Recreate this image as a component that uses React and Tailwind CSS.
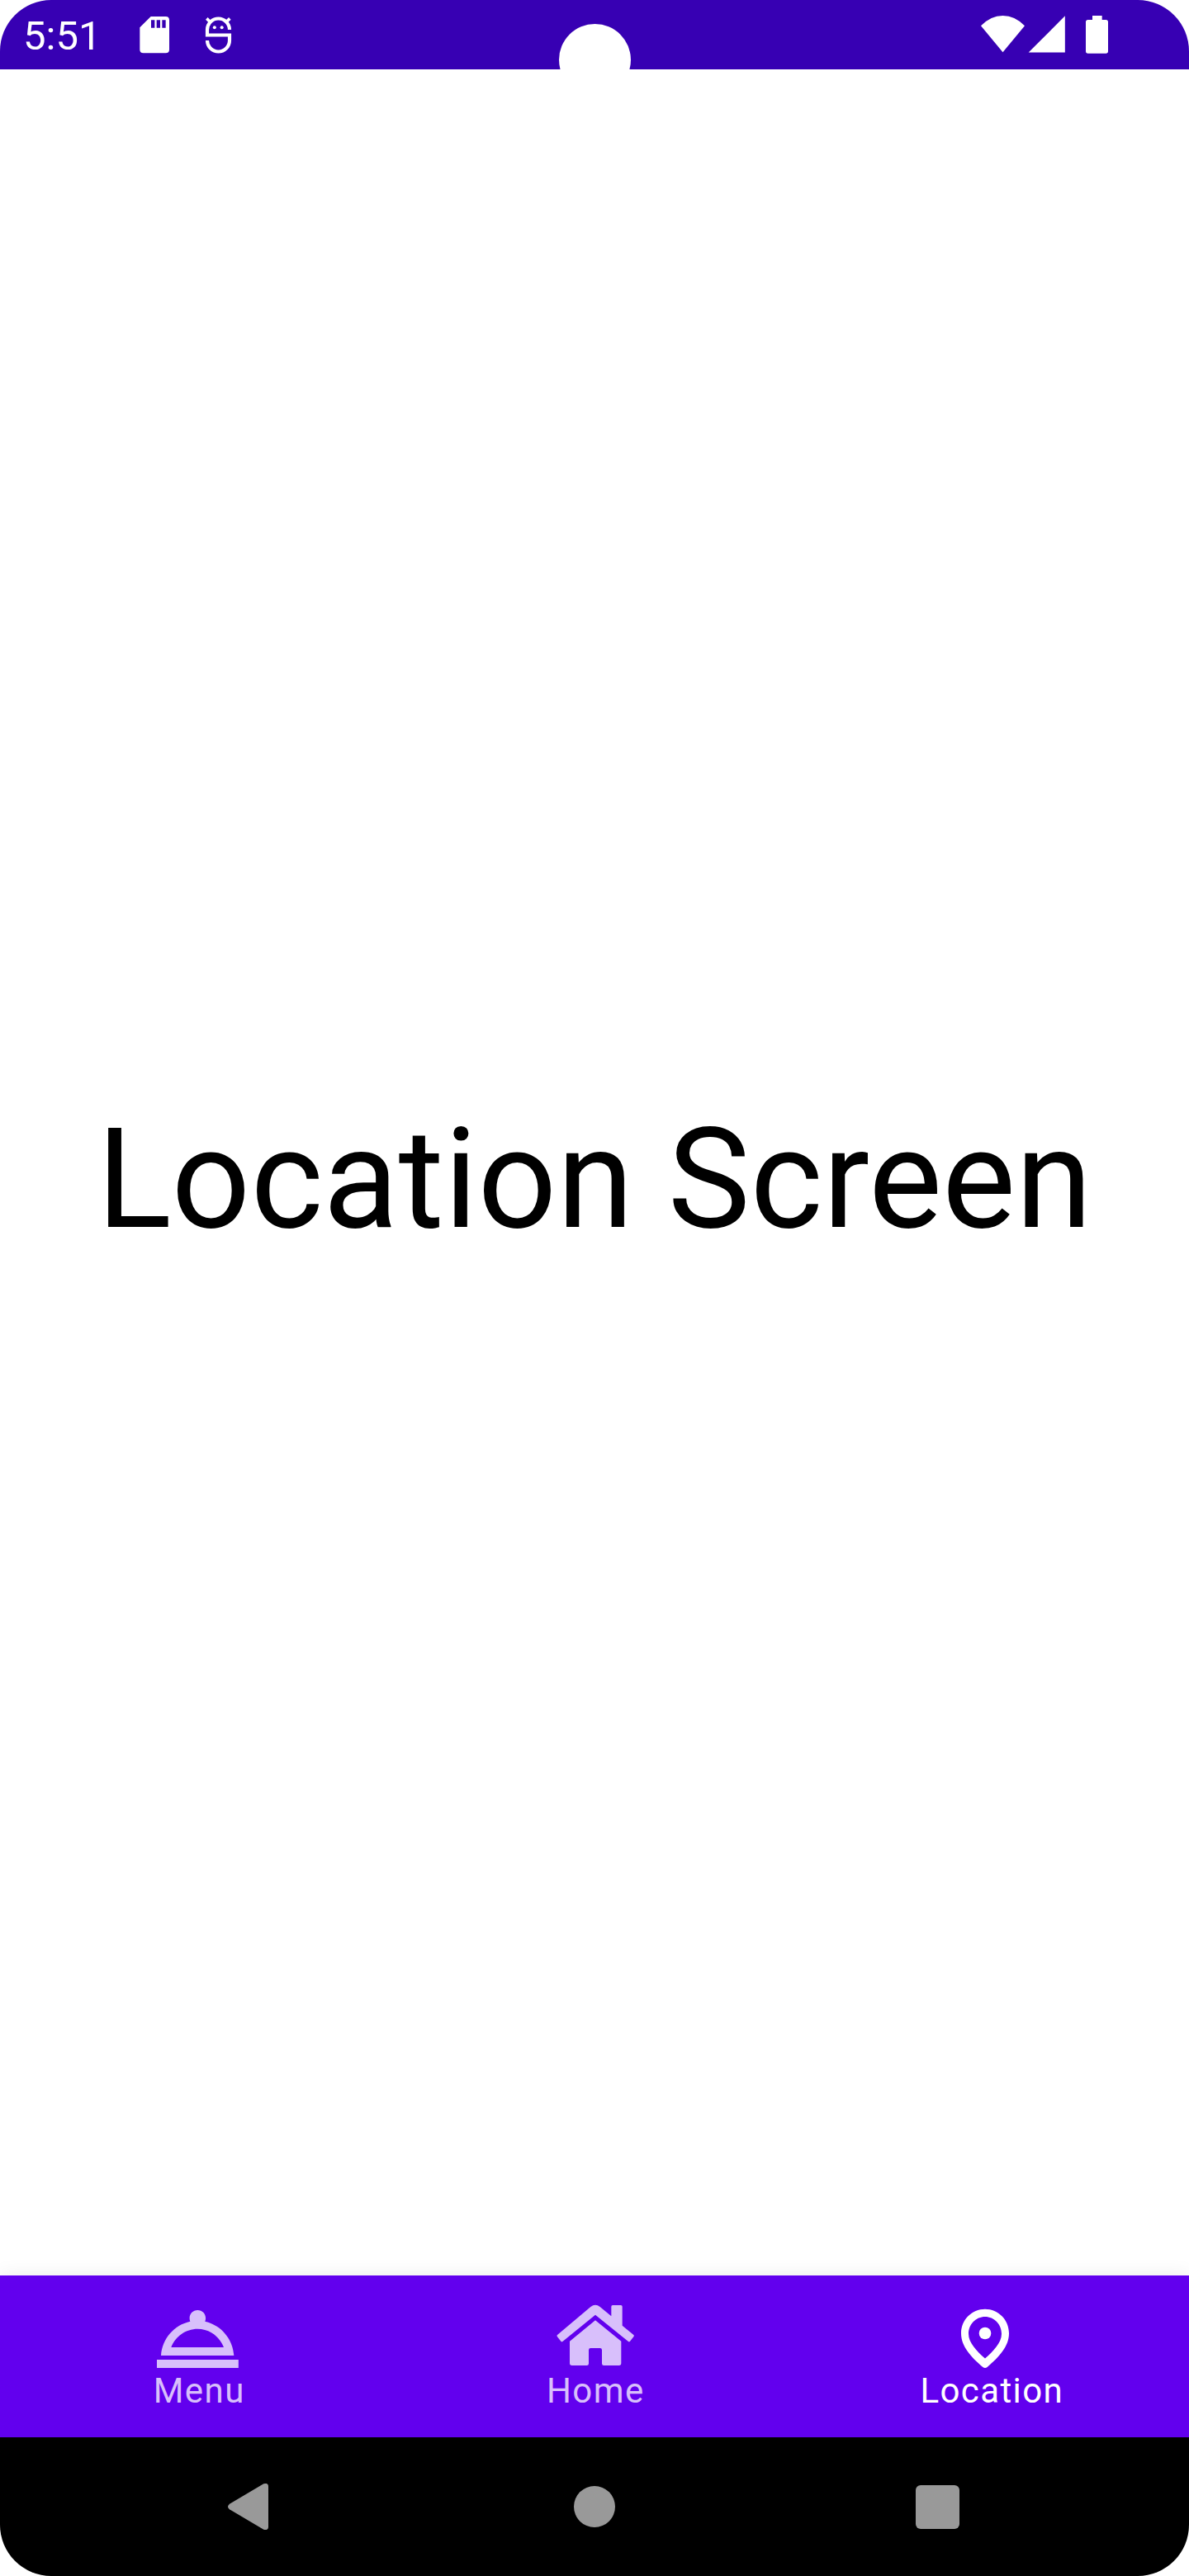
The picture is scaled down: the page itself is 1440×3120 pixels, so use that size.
function StatusBar() {
  return (
    <header className="relative flex h-[84px] shrink-0 overflow-hidden bg-[#3700b3] text-white">
      <span className="ml-[28px] mt-[15px] w-[132px] text-[49px] leading-[58px]">5:51</span>
      <svg className="h-[84px] w-[60px]" viewBox="480 0 180 252" fill="currentColor">
        <path
          fillRule="evenodd"
          d="M548 60H602Q615 60 615 73V180Q615 193 602 193H521Q508 193 508 180V100ZM549 73V101H562V73ZM569 73V101H582V73ZM589 73V101H602V73Z"
        />
      </svg>
      <svg className="ml-[15px] h-[84px] w-[60px]" viewBox="705 0 180 252" fill="none" stroke="currentColor">
        <path d="M834 108A40.500 40.500 0 0 0 753 108V127.500H834V147A40.500 40.500 0 0 1 753 147" strokeWidth="12.500" />
        <path d="M751 67L766 82M835 67L820 82" strokeWidth="11" />
        <circle cx="779.500" cy="100" r="6" fill="currentColor" stroke="none" />
        <circle cx="806" cy="100" r="6" fill="currentColor" stroke="none" />
      </svg>
      <div className="absolute left-[677px] top-[29px] h-[87px] w-[87px] rounded-full bg-white" />
      <svg className="ml-auto mr-[80px] h-[84px] w-[180px]" viewBox="60 0 540 252" fill="currentColor">
        <path d="M84 94Q119 57 163.500 57Q208 57 243 94L163.500 190Z" />
        <path d="M389.500 58V190.500H257Z" />
        <path d="M489 57H524V72H538Q546 72 546 80V186Q546 194 538 194H473Q465 194 465 186V80Q465 72 473 72H489Z" />
      </svg>
    </header>
  );
}

function MenuIcon() {
  return (
    <svg className="h-[84px] w-[110px]" viewBox="75 138 330 252" fill="currentColor">
      <path d="M90 354H386.500V384H90Z" />
      <path
        fillRule="evenodd"
        d="M105 339C109 278 153 228 211 215.500C203 194 217 174 238 174C259 174 273 194 265 215.500C323 228 366 278 370 339ZM142 309H333C318 270 281 242.500 238 242.500C195 242.500 157 270 142 309Z"
      />
    </svg>
  );
}

function HomeIcon() {
  return (
    <svg className="h-[84px] w-[110px]" viewBox="75 138 330 252" fill="currentColor">
      <path d="M105 264L226 162Q243 149 260 162L301 196V161Q301 156 306 156H336Q341 156 341 161V230L382 264Q385 267 382 271L369 287Q366 290 362 287L243 191L125 287Q121 290 118 287L105 271Q102 267 105 264Z" />
      <path d="M243 211L337 287V367Q337 375 329 375H274Q267 375 267 368V319Q267 312 260 312H226Q219 312 219 319V368Q219 375 212 375H158Q150 375 150 367V287Z" />
    </svg>
  );
}

function LocationIcon() {
  return (
    <svg className="h-[84px] w-[110px]" viewBox="135 138 330 252" fill="currentColor">
      <path
        fillRule="evenodd"
        d="M279 170C231 170 192 209 192 258C192 306 228 344 271 381Q279 387 287 381C330 344 366 306 366 258C366 209 327 170 279 170ZM279 198C312 198 339 225 339 260C339 292 309 323 279 349.500C249 323 219 292 219 260C219 225 246 198 279 198Z"
      />
      <circle cx="279" cy="258" r="22" />
    </svg>
  );
}

const tabs = [
  { label: "Menu", Icon: MenuIcon, active: false },
  { label: "Home", Icon: HomeIcon, active: false },
  { label: "Location", Icon: LocationIcon, active: true },
];

function BottomTabs() {
  return (
    <nav className="grid h-[196px] shrink-0 grid-cols-3 bg-[#6200ee] shadow-[0_0_22px_rgba(0,0,0,0.08)]">
      {tabs.map(({ label, Icon, active }) => (
        <div
          key={label}
          className={`flex flex-col items-center pt-[30px] ${active ? "text-white" : "text-[#d8bffb]"}`}
        >
          <Icon />
          <span className="mt-px pl-[2.5px] text-[42px] leading-[50px] tracking-[1.4px]">{label}</span>
        </div>
      ))}
    </nav>
  );
}

function SystemNav() {
  return (
    <footer className="flex h-[168px] shrink-0 items-center bg-black pl-[276px] text-[#999999]">
      <svg className="h-[56px] w-[49px]" viewBox="828 204 147 168" fill="currentColor">
        <path d="M958 205Q975 200 975 215V361Q975 376 958 371L834 298Q822 288 834 278Z" />
      </svg>
      <div className="ml-[370px] h-[50px] w-[50px] rounded-full bg-[#999999]" />
      <div className="ml-[364px] h-[53px] w-[53px] rounded-[6px] bg-[#999999]" />
    </footer>
  );
}

export default function App() {
  return (
    <div className="h-[3120px] w-[1440px] bg-white font-['Roboto',sans-serif]">
      <div className="flex h-full flex-col overflow-hidden rounded-[62px] bg-white">
        <StatusBar />
        <main className="flex flex-1 items-center justify-center pt-[17px]">
          <h1 className="whitespace-nowrap text-[168px] leading-[197px] text-black">Location Screen</h1>
        </main>
        <BottomTabs />
        <SystemNav />
      </div>
    </div>
  );
}
